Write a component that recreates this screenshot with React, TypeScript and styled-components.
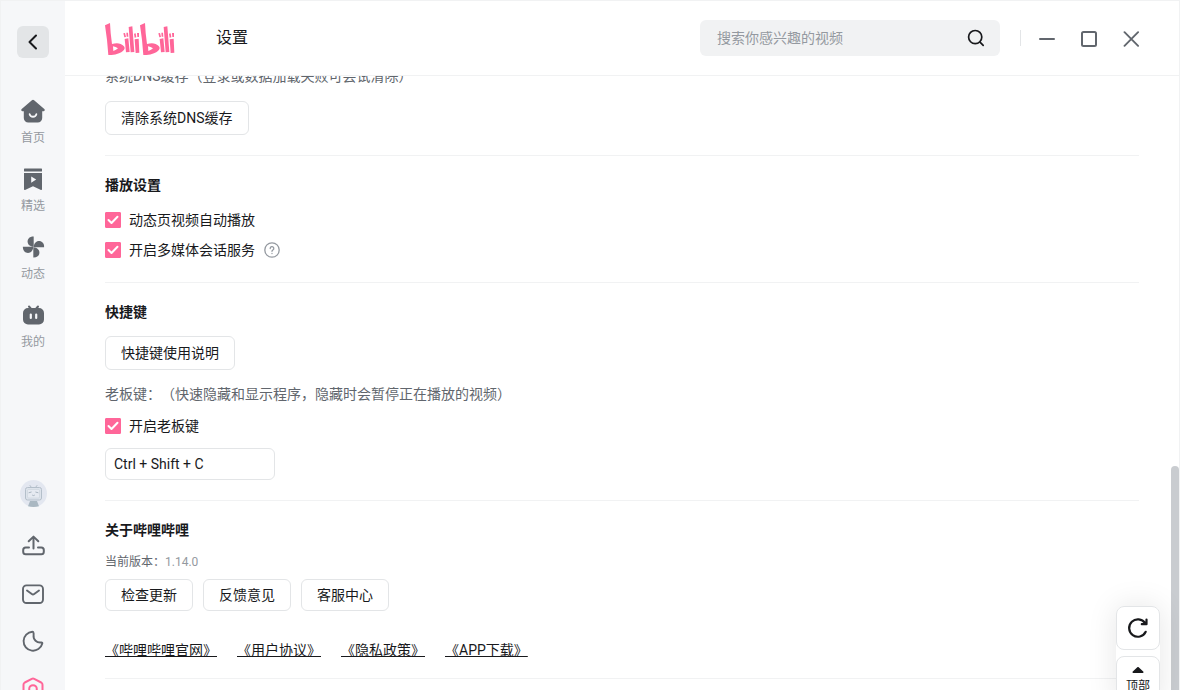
import React from "react";
import styled, { createGlobalStyle } from "styled-components";

const GlobalStyle = createGlobalStyle`
  * { box-sizing: border-box; }
  body { margin: 0; background: #fff; }
  body, button, input {
    font-family: Roboto, "Noto Sans CJK SC", sans-serif;
    font-size: 14px;
    color: #18191c;
    text-spacing-trim: space-all;
  }
  button { cursor: pointer; }
`;

const Window = styled.div`
  display: flex;
  height: 100vh;
  overflow: hidden;
  position: relative;
  border: 1px solid #f1f2f3;
  border-bottom: 0;
`;

const Sidebar = styled.aside`
  flex: 0 0 64px;
  display: flex;
  flex-direction: column;
  align-items: center;
  overflow: hidden;
  padding-top: 25px;
  background: #f6f7f9;
`;

const PlainButton = styled.button`
  display: flex;
  align-items: center;
  justify-content: center;
  padding: 0;
  border: 0;
  background: none;
  color: #61666d;
`;

const BackButton = styled(PlainButton)`
  width: 32px;
  height: 32px;
  border-radius: 6px;
  background: #e3e5e7;
  color: #18191c;
`;

const Nav = styled.nav`
  display: flex;
  flex-direction: column;
  gap: 20px;
  margin-top: 41px;
`;

const NavLink = styled.a`
  display: flex;
  flex-direction: column;
  align-items: center;
  gap: 6px;
  color: #61666d;
  font-size: 12px;
  line-height: 18px;
  text-decoration: none;
`;

const NavLabel = styled.span`
  color: #9499a0;
`;

const Tools = styled.div`
  display: flex;
  flex-direction: column;
  align-items: center;
  gap: 24px;
  margin-top: auto;
  margin-bottom: -11px;
`;

const ToolButton = styled(PlainButton)<{ $active?: boolean }>`
  width: 24px;
  height: 24px;
  color: ${(p) => (p.$active ? "#ff6699" : "#61666d")};
`;

const AvatarButton = styled(PlainButton)`
  width: 32px;
  height: 32px;
`;

const Main = styled.main`
  flex: 1;
  min-width: 0;
  display: flex;
  flex-direction: column;
`;

const Header = styled.header`
  flex: 0 0 75px;
  display: flex;
  align-items: center;
  padding: 0 40px;
  border-bottom: 1px solid #f1f2f3;
`;

const PageTitle = styled.h1`
  margin: 0 auto 0 41px;
  font-size: 16px;
  font-weight: 400;
  line-height: 24px;
`;

const SearchBox = styled.form`
  display: flex;
  align-items: center;
  width: 300px;
  height: 36px;
  padding: 0 14px 0 17px;
  border-radius: 6px;
  background: #f1f2f3;
`;

const SearchInput = styled.input`
  flex: 1;
  min-width: 0;
  height: 20px;
  padding: 0;
  border: 0;
  outline: 0;
  background: none;
  line-height: 20px;
  &::placeholder { color: #9499a0; opacity: 1; line-height: 20px; }
`;

const SearchButton = styled(PlainButton)`
  color: #18191c;
`;

const WindowControls = styled.div`
  display: flex;
  align-items: center;
  gap: 26px;
  margin-left: 20px;
  padding-left: 18px;
  height: 16px;
  border-left: 1px solid #e3e5e7;
`;

const Content = styled.div`
  flex: 1;
  min-height: 0;
  overflow: hidden;
  padding: 0 40px;
`;

/* The pane is scrolled part of the way down its first group. */
const Scrolled = styled.div`
  margin-top: -30px;
`;

const Section = styled.section<{ $end?: number }>`
  display: flex;
  flex-direction: column;
  align-items: flex-start;
  padding: 20px 0 ${(p) => p.$end ?? 20}px;
  border-bottom: 1px solid #f1f2f3;
`;

const SectionTitle = styled.h2<{ $gap?: number }>`
  margin: 0 0 ${(p) => p.$gap ?? 15}px;
  font-size: 14px;
  font-weight: 700;
  line-height: 18px;
`;

const Hint = styled.p<{ $gap: number }>`
  margin: 0 0 ${(p) => p.$gap}px;
  color: #61666d;
  line-height: 20px;
`;

const VersionLine = styled(Hint)`
  font-size: 12px;
`;

const Version = styled.span`
  color: #9499a0;
`;

const CheckList = styled.div`
  display: flex;
  flex-direction: column;
  gap: 6px;
`;

const CheckRow = styled.div`
  display: flex;
  align-items: center;
  gap: 8px;
  height: 24px;
`;

const CheckLabel = styled.label`
  display: flex;
  align-items: center;
  gap: 8px;
  line-height: 20px;
`;

const CheckSlot = styled.span`
  display: grid;
  width: 16px;
  height: 16px;
  & > * { grid-area: 1 / 1; }
  & > svg { pointer-events: none; opacity: 0; }
  & > input:checked + svg { opacity: 1; }
`;

const CheckInput = styled.input`
  appearance: none;
  width: 16px;
  height: 16px;
  margin: 0;
  border: 1px solid #c9ccd0;
  border-radius: 1px;
  &:checked { border-color: #ff6699; background: #ff6699; }
`;

const Button = styled.button<{ $tall?: boolean }>`
  height: ${(p) => (p.$tall ? 34 : 32)}px;
  padding: 0 15px;
  border: 1px solid #e3e5e7;
  border-radius: 6px;
  background: #fff;
  line-height: 20px;
`;

const ButtonRow = styled.div`
  display: flex;
  gap: 10px;
`;

const BossKey = styled.div`
  display: flex;
  flex-direction: column;
  align-items: flex-start;
  margin-top: 14px;
`;

const HotkeyInput = styled.input`
  width: 170px;
  height: 32px;
  margin-top: 10px;
  padding: 0 8px;
  border: 1px solid #e3e5e7;
  border-radius: 6px;
  background: #fff;
`;

const Links = styled.div`
  display: flex;
  gap: 20px;
  margin-top: 27px;
`;

const DocLink = styled.a`
  color: #18191c;
  line-height: 24px;
  text-decoration: underline;
  text-underline-offset: 1px;
  text-decoration-skip-ink: none;
`;

const Thumb = styled.div`
  position: absolute;
  top: 67.5%;
  right: 0;
  bottom: 0;
  width: 8px;
  border-radius: 4px 4px 0 0;
  background: #c9ccd0;
`;

const Floating = styled.div`
  position: absolute;
  right: 19px;
  bottom: -16px;
  display: flex;
  flex-direction: column;
  gap: 6px;
  border-radius: 8px;
  box-shadow: 0 0 30px rgba(0, 0, 0, 0.1);
`;

const FloatButton = styled.button<{ $height: number }>`
  display: flex;
  flex-direction: column;
  align-items: center;
  justify-content: center;
  gap: 4px;
  width: 44px;
  height: ${(p) => p.$height}px;
  padding: 0;
  border: 1px solid #e3e5e7;
  border-radius: 8px;
  background: #fff;
  font-size: 12px;
  line-height: 18px;
`;

const stroke = {
  fill: "none",
  stroke: "currentColor",
  strokeLinecap: "round",
  strokeLinejoin: "round",
} as const;

const LogoHalf = () => (
  <>
    <path
      fillRule="evenodd"
      d="M0 7 L15 0 Q16 28 21 63 Q37 59 47 63 Q59 68 59 76 Q57 85 42 91 Q27 97 10 96 Q7 50 0 7Z M24 70 L25 84 Q34 81 39 76 Q32 71 24 70Z"
    />
    <path d="M59 48 L70 46 L74 87 L63 88Z M71 12 L82 10 L88 87 L77 88Z M89 49 L101 47 L103 89 L92 90Z" />
    <path d="M55 31 L60 30 L63 42 L58 43Z M64 29 L69 29 L70 41 L65 41Z M87 32 L92 31 L94 43 L89 44Z M96 30 L102 30 L102 42 L97 42Z" />
  </>
);

const Logo = () => (
  <svg width="70" height="34" viewBox="0 -6 210 102" fill="#ff6699" role="img" aria-label="bilibili">
    <LogoHalf />
    <g transform="translate(105 0)"><LogoHalf /></g>
  </svg>
);

const HomeIcon = () => (
  <svg width="24" height="24" viewBox="0 -0.5 24 24" fill="currentColor">
    <path d="M10.9.7a1.7 1.7 0 0 1 2.2 0L23.3 9.600c.9.800.4 2.100-.7 2.100H21.200V18.500a4.500 4.500 0 0 1-4.500 4.500H7.300a4.500 4.500 0 0 1-4.500-4.500V11.700H1.400C.3 11.700-.2 10.400.7 9.600Z" />
    <path {...stroke} stroke="#f6f7f9" strokeWidth="1.8" d="M8.600 14.600a3.500 3.500 0 0 0 6.800 0" />
  </svg>
);

const FeaturedIcon = () => (
  <svg width="24" height="24" viewBox="0 -0.5 24 24" fill="currentColor">
    <rect x="3" y="1" width="18" height="3" rx=".6" />
    <path fillRule="evenodd" d="M3 5.500h18v16.300c0 .6-.5.800-1 .600l-8-3.600-8 3.600c-.5.200-1 0-1-.6ZM10.200 9v6.200l5-3.100Z" />
  </svg>
);

const FanIcon = () => (
  <svg width="24" height="24" viewBox="-0.5 0 24 24" fill="currentColor">
    {[0, 90, 180, 270].map((angle) => (
      <path
        key={angle}
        transform={`rotate(${angle} 12 12)`}
        d="M12.200 11.800V1.400C8.400 1.200 6.100 3.500 6.100 6.500c0 2.900 2.300 5.100 6.100 5.300Z"
      />
    ))}
  </svg>
);

const MineIcon = () => (
  <svg width="24" height="24" viewBox="-0.5 -1 24 24" fill="currentColor">
    <path {...stroke} strokeWidth="2" d="M7.500 2.500l1.700 2M16.500 2.500l-1.700 2" />
    <path
      fillRule="evenodd"
      d="M6.500 4h11a5 5 0 0 1 5 5v6.500a5 5 0 0 1-5 5h-11a5 5 0 0 1-5-5V9a5 5 0 0 1 5-5ZM9.300 9.500a1.100 1.100 0 0 0-1.100 1.100v3.300a1.100 1.100 0 0 0 2.200 0v-3.300a1.100 1.100 0 0 0-1.100-1.100ZM14.700 9.500a1.100 1.100 0 0 0-1.100 1.100v3.300a1.100 1.100 0 0 0 2.200 0v-3.300a1.100 1.100 0 0 0-1.100-1.100Z"
    />
  </svg>
);

const Avatar = () => (
  <svg width="28" height="28" viewBox="-0.5 -0.500 28 28">
    <circle cx="14" cy="14" r="13.500" fill="#e3e7f0" />
    <path d="M10.500 21.500h7l2 5.200q-5.500 1.600-11 0Z" fill="#aab8c2" />
    <path {...stroke} stroke="#b4bfca" strokeWidth="1" d="M10.500 6l1.500 2M17.500 6L16 8" />
    <rect x="6" y="8" width="16" height="12.500" rx="2" fill="#dde3eb" stroke="#b4bfca" />
    <rect x="8" y="10" width="12" height="8.500" rx="1" fill="#e6eaf1" stroke="#cbd3dc" strokeWidth=".6" />
    <path {...stroke} stroke="#9aa8b5" strokeWidth=".8" d="M9.500 13.200l2.200-.6M18.500 13.200l-2.200-.6M13 15.800q1 .8 2 0" />
  </svg>
);

const UploadIcon = () => (
  <svg width="24" height="24" viewBox="-0.5 -1 24 24" {...stroke} strokeWidth="2">
    <path d="M12 14.500V3M7.200 7.300L12 2.600l4.800 4.700" />
    <path d="M7.500 13.500H4.200a2.500 2.500 0 0 0-2.500 2.500v1.800a2.500 2.500 0 0 0 2.500 2.500h15.600a2.500 2.500 0 0 0 2.500-2.500V16a2.500 2.500 0 0 0-2.500-2.500h-3.300" />
  </svg>
);

const MailIcon = () => (
  <svg width="24" height="24" viewBox="0 -1 24 24" {...stroke} strokeWidth="1.900">
    <rect x="2" y="3.400" width="20" height="17.600" rx="3.500" />
    <path d="M6 8.500l4.800 3.600q1.200.9 2.400 0l4.800-3.600" />
  </svg>
);

const MoonIcon = () => (
  <svg width="24" height="24" viewBox="0 0 24 24" {...stroke} strokeWidth="1.900">
    <path d="M11.400 2.700a9.500 9.500 0 1 0 9.900 11.800c.2-.7-.3-1.200-1-1.100-4.500.7-8.300-2.800-7.700-7.300.1-1 .1-1.500-.1-2.400-.1-.7-.5-1-1.100-1Z" />
  </svg>
);

const SettingsIcon = () => (
  <svg width="24" height="24" viewBox="0 0 24 24" {...stroke} strokeWidth="2">
    <path d="M10.800 1.900q1.200-.6 2.400 0l7 3.600q1.300.8 1.300 2.200v8.600q0 1.400-1.300 2.200l-7 3.600q-1.200.6-2.400 0l-7-3.600q-1.300-.8-1.300-2.200V7.700q0-1.400 1.300-2.200Z" />
    <circle cx="12" cy="12" r="3.800" />
  </svg>
);

const Check = ({ label, children }: { label: string; children?: React.ReactNode }) => (
  <CheckRow>
    <CheckLabel>
      <CheckSlot>
        <CheckInput type="checkbox" defaultChecked />
        <svg width="16" height="16" viewBox="0 0 16 16" {...stroke} stroke="#fff" strokeWidth="2">
          <path d="M3.500 8l3 3 6-6.300" />
        </svg>
      </CheckSlot>
      {label}
    </CheckLabel>
    {children}
  </CheckRow>
);

const navItems = [
  { label: "首页", icon: <HomeIcon /> },
  { label: "精选", icon: <FeaturedIcon /> },
  { label: "动态", icon: <FanIcon /> },
  { label: "我的", icon: <MineIcon /> },
];

const docs = ["《哔哩哔哩官网》", "《用户协议》", "《隐私政策》", "《APP下载》"];

export default function App() {
  return (
    <Window lang="zh-CN">
      <GlobalStyle />
      <Sidebar>
        <BackButton aria-label="返回">
          <svg width="16" height="16" viewBox="0 0 16 16" {...stroke} strokeWidth="2">
            <path d="M11 1.500L4.500 8l6.500 6.500" />
          </svg>
        </BackButton>
        <Nav>
          {navItems.map((item) => (
            <NavLink key={item.label} href="#">
              {item.icon}
              <NavLabel>{item.label}</NavLabel>
            </NavLink>
          ))}
        </Nav>
        <Tools>
          <AvatarButton aria-label="头像"><Avatar /></AvatarButton>
          <ToolButton aria-label="投稿"><UploadIcon /></ToolButton>
          <ToolButton aria-label="消息"><MailIcon /></ToolButton>
          <ToolButton aria-label="夜间模式"><MoonIcon /></ToolButton>
          <ToolButton aria-label="设置" $active><SettingsIcon /></ToolButton>
        </Tools>
      </Sidebar>
      <Main>
        <Header>
          <Logo />
          <PageTitle>设置</PageTitle>
          <SearchBox role="search">
            <SearchInput type="text" aria-label="搜索" placeholder="搜索你感兴趣的视频" />
            <SearchButton type="button" aria-label="搜索">
              <svg width="20" height="20" viewBox="0 0 20 20" {...stroke} strokeWidth="1.700">
                <circle cx="9.200" cy="9.100" r="6.600" />
                <path d="M14 14.200l3.200 3.200" />
              </svg>
            </SearchButton>
          </SearchBox>
          <WindowControls>
            <PlainButton aria-label="最小化">
              <svg width="16" height="18" viewBox="0 -2 16 18" {...stroke} strokeWidth="2">
                <path d="M1 8h14" />
              </svg>
            </PlainButton>
            <PlainButton aria-label="最大化">
              <svg width="16" height="18" viewBox="0 -2 16 18" {...stroke} strokeWidth="2">
                <rect x="1" y="1" width="14" height="14" rx="1.500" />
              </svg>
            </PlainButton>
            <PlainButton aria-label="关闭">
              <svg width="16" height="18" viewBox="0 -2 16 18" {...stroke} strokeWidth="1.900">
                <path d="M1.500 1.200l13.600 13.600M15.100 1.200L1.500 14.800" />
              </svg>
            </PlainButton>
          </WindowControls>
        </Header>
        <Content>
          <Scrolled>
            <Section>
              <Hint $gap={15}>系统DNS缓存（登录或数据加载失败可尝试清除）</Hint>
              <Button $tall>清除系统DNS缓存</Button>
            </Section>
            <Section>
              <SectionTitle $gap={14}>播放设置</SectionTitle>
              <CheckList>
                <Check label="动态页视频自动播放" />
                <Check label="开启多媒体会话服务">
                  <PlainButton aria-label="说明">
                    <svg width="18" height="18" viewBox="0 0 18 18" {...stroke} stroke="#9499a0" strokeWidth="1.300">
                      <circle cx="9" cy="9" r="7.200" />
                      <path d="M7.200 7.500a1.800 1.800 0 1 1 2.700 1.500c-.6.400-.9.700-.9 1.300M9 12.500v.1" />
                    </svg>
                  </PlainButton>
                </Check>
              </CheckList>
            </Section>
            <Section>
              <SectionTitle>快捷键</SectionTitle>
              <Button $tall>快捷键使用说明</Button>
              <BossKey>
                <Hint $gap={10}>老板键：（快速隐藏和显示程序，隐藏时会暂停正在播放的视频）</Hint>
                <Check label="开启老板键" />
                <HotkeyInput aria-label="老板键" defaultValue="Ctrl + Shift + C" />
              </BossKey>
            </Section>
            <Section $end={16}>
              <SectionTitle $gap={13}>关于哔哩哔哩</SectionTitle>
              <VersionLine $gap={7}>当前版本：<Version>1.14.0</Version></VersionLine>
              <ButtonRow>
                <Button>检查更新</Button>
                <Button>反馈意见</Button>
                <Button>客服中心</Button>
              </ButtonRow>
              <Links>
                {docs.map((doc) => (
                  <DocLink key={doc} href="#">{doc}</DocLink>
                ))}
              </Links>
            </Section>
          </Scrolled>
        </Content>
      </Main>
      <Thumb />
      <Floating>
        <FloatButton $height={44} aria-label="刷新">
          <svg width="24" height="24" viewBox="0 0 24 24" {...stroke} strokeWidth="2.200">
            <path d="M19.700 15.800a8.700 8.700 0 1 1-.6-8.600M20.500 3.500v4.700h-4.700" />
          </svg>
        </FloatButton>
        <FloatButton $height={50}>
          <svg width="12" height="6" viewBox="0 0 12 6">
            <path d="M5.300.3a1 1 0 0 1 1.400 0l4.500 4.200c.6.500.3 1.500-.5 1.500H1.300C.5 6 .2 5 .8 4.500Z" fill="#18191c" />
          </svg>
          顶部
        </FloatButton>
      </Floating>
    </Window>
  );
}
